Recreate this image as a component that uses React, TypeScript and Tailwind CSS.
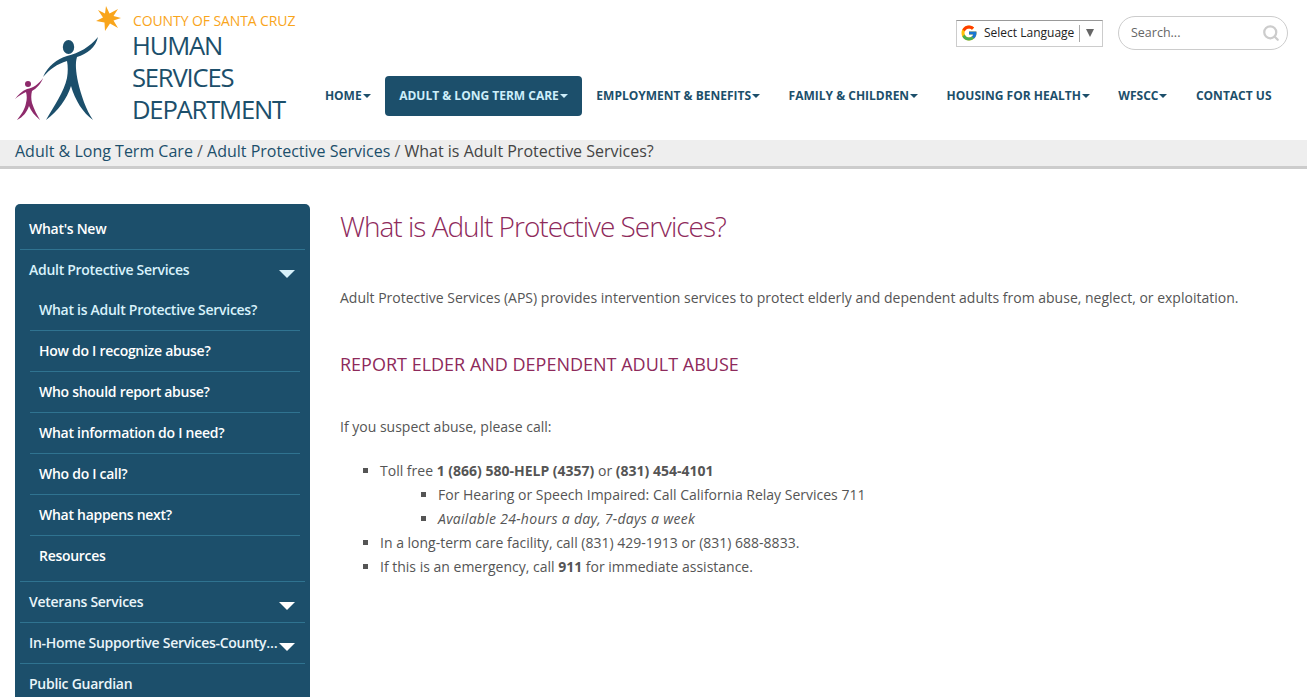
import { FcGoogle } from "react-icons/fc";
import { Search } from "lucide-react";

const navItems = [
  { label: "Home", caret: true },
  { label: "Adult & Long Term Care", caret: true, active: true },
  { label: "Employment & Benefits", caret: true },
  { label: "Family & Children", caret: true },
  { label: "Housing for Health", caret: true },
  { label: "WFSCC", caret: true },
  { label: "Contact Us", caret: false },
];

const subItems = [
  "What is Adult Protective Services?",
  "How do I recognize abuse?",
  "Who should report abuse?",
  "What information do I need?",
  "Who do I call?",
  "What happens next?",
  "Resources",
];

function Logo() {
  return (
    <div className="flex shrink-0 w-[311px] pl-[133px] relative">
      <svg className="absolute left-0 top-0" width="130" height="130" viewBox="0 0 130 130">
        <path
          fill="#f9a51b"
          d="M106 6 L109.5 13.5 L118 9 L113.5 16 L121 18 L113.5 20.5 L118 28 L110 23.5 L105 31 L104.5 22.5 L96 21 L103 17.5 L98 10 L105 13.5 Z"
        />
        <ellipse cx="68.5" cy="47" rx="5.7" ry="7" fill="#1c4f6b" />
        <path
          fill="#1c4f6b"
          d="M98 37 C96 47 87 54 77 57 C75 63 76 72 78 82 C81 95 86 110 93 120 C83 113 75 100 71 86 C67 99 58 111 46 120 C54 106 64 92 67 78 C68 72 68 66 67 61 C57 64 50 69 43 77 C48 66 57 59 67 56 C79 53 90 47 98 37 Z"
        />
        <circle cx="28" cy="84" r="3" fill="#8e2a6b" />
        <path
          fill="#8e2a6b"
          d="M43 78 C41 84 36 89 32 91 C31 95 31 99 32 103 C34 109 37 115 40 120 C35 116 31 111 29 106 C27 112 23 117 17 120 C21 115 25 109 26 103 C27 99 27 96 26 92 C22 94 18 96 15 99 C18 95 22 91 27 89 C33 88 39 84 43 78 Z"
        />
      </svg>
      <div className="pt-[12px] whitespace-nowrap">
        <div className="text-[14px] tracking-[-0.1px] leading-[18px] text-[#f9a51b]">COUNTY OF SANTA CRUZ</div>
        <div className="text-[#1c4f6b] text-[25.6px] tracking-[-1.2px] leading-[32px] -ml-[1px]">
          <div>HUMAN</div>
          <div>SERVICES</div>
          <div>DEPARTMENT</div>
        </div>
      </div>
    </div>
  );
}

function TopNav() {
  return (
    <nav className="flex items-center gap-[0.5px] mr-[2.5px]">
      {navItems.map((item) => (
        <a
          key={item.label}
          className={`flex items-center h-[40px] px-[14px] rounded text-[12px] font-bold uppercase whitespace-nowrap ${
            item.active ? "bg-[#1c4f6b] text-[#cdeefa]" : "text-[#1c4f6b]"
          }`}
        >
          {item.label}
          {item.caret && (
            <span
              className={`ml-[1px] w-0 h-0 border-x-[4px] border-x-transparent border-t-[4px] ${
                item.active ? "border-t-[#cdeefa]" : "border-t-[#1c4f6b]"
              }`}
            />
          )}
        </a>
      ))}
    </nav>
  );
}

function Header() {
  return (
    <header className="flex h-[140px]">
      <Logo />
      <div className="flex-1 min-w-0 flex flex-col items-end pr-[19px]">
        <div className="flex items-center mt-[16px] h-[34px]">
          <div className="flex items-center h-[27px] w-[147px] border border-[#ccc] border-t-[#999] pl-[3px] mr-[15px]">
            <FcGoogle className="w-[18px] h-[18px]" />
            <span className="ml-[6px] text-[12px] text-[#222]">Select Language</span>
            <span className="ml-[5px] h-[17px] border-l border-[#aaa]" />
            <span className="ml-[6px] w-0 h-0 border-x-[4.5px] border-x-transparent border-t-[8px] border-t-[#666]" />
          </div>
          <div className="flex items-center justify-between w-[170px] h-[34px] rounded-full border border-[#ccc] pl-[12px] pr-[7px]">
            <span className="text-[12.5px] text-[#666]">Search...</span>
            <Search className="w-[18px] h-[18px] text-[#ccc]" strokeWidth={3} />
          </div>
        </div>
        <div className="mt-[26px]">
          <TopNav />
        </div>
      </div>
    </header>
  );
}

function Breadcrumb() {
  return (
    <div className="h-[29px] bg-[#eeeeee] border-b-[3px] border-[#cccccc] pl-[15px] text-[16px] leading-[23px] text-[#555]">
      <a className="text-[#1c4f6b]">Adult &amp; Long Term Care</a>
      {" / "}
      <a className="text-[#1c4f6b]">Adult Protective Services</a>
      {" / "}
      <span className="text-[#444]">What is Adult Protective Services?</span>
    </div>
  );
}

function Arrow({ open }: { open?: boolean }) {
  return (
    <span
      className={`absolute right-[10px] top-[20px] w-0 h-0 border-x-[8px] border-x-transparent border-t-[8px] ${
        open ? "border-t-[#d8f2fb]" : "border-t-white"
      }`}
    />
  );
}

function Sidebar() {
  return (
    <aside className="w-[295px] shrink-0 bg-[#1c4f6b] rounded-t-[5px] px-[5px] text-[14px] font-semibold tracking-[-0.28px] text-[#eaf5f9]">
      <div className="h-[46px] pt-[13px] pl-[9px] leading-[23px] border-b border-[#2f7390] text-white">What's New</div>
      <div className="relative h-[40px] pt-[8px] pl-[9px] leading-[23px] text-[#d8f2fb]">
        Adult Protective Services
        <Arrow open />
      </div>
      <div className="border-b border-[#2f7390] pb-[4px]">
        <div className="pl-[10px] pr-[5px]">
          {subItems.map((s, i) => (
            <div
              key={s}
              className={`h-[41px] pl-[9px] pt-[8px] leading-[23px] ${
                i < subItems.length - 1 ? "border-b border-[#2f7390]" : ""
              } ${i === 0 ? "text-[#d8f2fb]" : "text-white"}`}
            >
              {s}
            </div>
          ))}
        </div>
      </div>
      <div className="relative h-[41px] pt-[8px] pl-[9px] leading-[23px] border-b border-[#2f7390]">
        Veterans Services
        <Arrow />
      </div>
      <div className="relative h-[41px] pt-[8px] pl-[9px] pr-[26px] leading-[23px] border-b border-[#2f7390]">
        <div className="truncate">In-Home Supportive Services-County Staff</div>
        <Arrow />
      </div>
      <div className="h-[41px] pt-[8px] pl-[9px] leading-[23px]">Public Guardian</div>
    </aside>
  );
}

function Content() {
  return (
    <main className="flex-1 pl-[30px] pr-[15px] text-[14px] leading-[24px] text-[#555]">
      <h1 className="text-[28px] leading-[34px] font-light tracking-[-1px] text-[#8e2a5b] mt-[5px]">
        What is Adult Protective Services?
      </h1>
      <p className="mt-[43px]">
        Adult Protective Services (APS) provides intervention services to protect elderly and dependent adults from abuse, neglect, or exploitation.
      </p>
      <h2 className="mt-[42px] text-[18px] leading-[24px] text-[#8e2a5b]">REPORT ELDER AND DEPENDENT ADULT ABUSE</h2>
      <p className="mt-[39px]">If you suspect abuse, please call:</p>
      <ul className="mt-[20px] pl-[40px] list-[square]">
        <li>
          Toll free <strong>1 (866) 580-HELP (4357)</strong> or <strong>(831) 454-4101</strong>
          <ul className="pl-[58px] list-[square]">
            <li>For Hearing or Speech Impaired: Call California Relay Services 711</li>
            <li>
              <em className="tracking-[0.28px]">Available 24-hours a day, 7-days a week</em>
            </li>
          </ul>
        </li>
        <li>In a long-term care facility, call (831) 429-1913 or (831) 688-8833.</li>
        <li>
          If this is an emergency, call <strong>911</strong> for immediate assistance.
        </li>
      </ul>
    </main>
  );
}

export default function App() {
  return (
    <div className="h-screen overflow-hidden bg-white font-['Open_Sans',sans-serif]">
      <Header />
      <Breadcrumb />
      <div className="flex pl-[15px] pt-[35px]">
        <Sidebar />
        <Content />
      </div>
    </div>
  );
}
